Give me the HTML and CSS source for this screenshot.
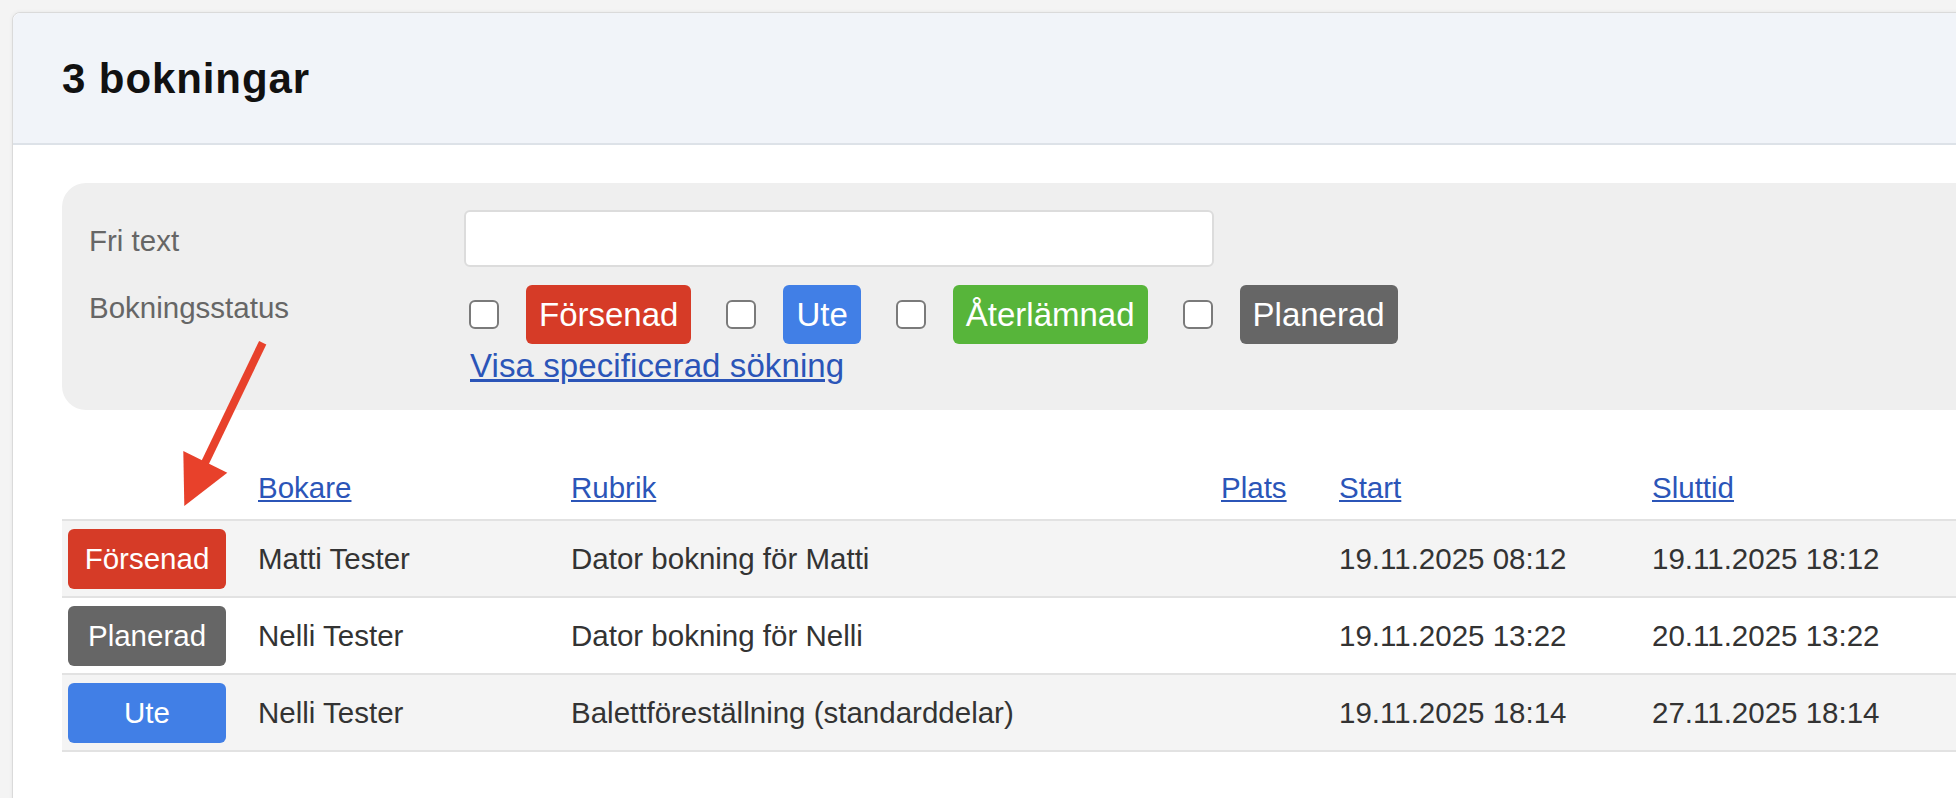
FILE: index.html
```html
<!DOCTYPE html>
<html lang="sv">
<head>
<meta charset="utf-8">
<title>3 bokningar</title>
<link rel="stylesheet" href="styles.css">
</head>
<body>
<div class="card">
  <div class="card-header">
    <h1 class="title">3 bokningar</h1>
  </div>
  <div class="card-body">
    <div class="filter">
      <div class="filter-label label-text">Fri text</div>
      <div class="filter-field"><input class="text-input" type="text"></div>
      <div class="filter-label label-status">Bokningsstatus</div>
      <div class="filter-field">
        <div class="status-row">
          <span class="cb"></span><span class="badge badge-lg red">Försenad</span>
          <span class="cb"></span><span class="badge badge-lg blue">Ute</span>
          <span class="cb"></span><span class="badge badge-lg green">Återlämnad</span>
          <span class="cb"></span><span class="badge badge-lg gray">Planerad</span>
        </div>
        <a class="link adv-link" href="#">Visa specificerad sökning</a>
      </div>
    </div>

    <table class="bookings">
      <colgroup>
        <col class="c-status"><col class="c-bokare"><col class="c-rubrik"><col class="c-plats"><col class="c-start"><col class="c-slut">
      </colgroup>
      <thead>
        <tr>
          <th></th>
          <th><a class="link" href="#">Bokare</a></th>
          <th><a class="link" href="#">Rubrik</a></th>
          <th><a class="link" href="#">Plats</a></th>
          <th><a class="link" href="#">Start</a></th>
          <th><a class="link" href="#">Sluttid</a></th>
        </tr>
      </thead>
      <tbody>
        <tr class="alt">
          <td><span class="badge badge-sm red">Försenad</span></td>
          <td>Matti Tester</td>
          <td>Dator bokning för Matti</td>
          <td></td>
          <td>19.11.2025 08:12</td>
          <td>19.11.2025 18:12</td>
        </tr>
        <tr>
          <td><span class="badge badge-sm gray">Planerad</span></td>
          <td>Nelli Tester</td>
          <td>Dator bokning för Nelli</td>
          <td></td>
          <td>19.11.2025 13:22</td>
          <td>20.11.2025 13:22</td>
        </tr>
        <tr class="alt">
          <td><span class="badge badge-sm blue">Ute</span></td>
          <td>Nelli Tester</td>
          <td>Balettföreställning (standarddelar)</td>
          <td></td>
          <td>19.11.2025 18:14</td>
          <td>27.11.2025 18:14</td>
        </tr>
      </tbody>
    </table>
  </div>
</div>

<svg class="annotation" width="1956" height="798" viewBox="0 0 1956 798" aria-hidden="true">
  <line x1="262.7" y1="342.7" x2="203" y2="467" stroke="#e8412b" stroke-width="8"/>
  <polygon points="183.3,451 227.3,472.7 184.3,506" fill="#e8412b"/>
</svg>
</body>
</html>
```

FILE: styles.css
```css
html, body {
  overflow: hidden;
}

body {
  margin: 0;
  background: #f4f4f4;
  font-family: "Liberation Sans", Arial, Helvetica, sans-serif;
  font-size: 29.5px;
  color: #333;
  position: relative;
  width: 1956px;
  height: 798px;
}

.card {
  margin: 12px 0 0 12px;
  width: 2100px;
  min-height: 900px;
  background: #fff;
  border: 1px solid #dadada;
  border-radius: 8px;
  box-shadow: 0 0 4px rgba(0, 0, 0, 0.06);
}

.card-header {
  background: #f1f4f9;
  padding: 41px 48px 39px;
  border-bottom: 2px solid #dde2e8;
  border-radius: 8px 0 0 0;
}

.title {
  margin: 0 0 0 1px;
  font-size: 42px;
  line-height: 50px;
  font-weight: 700;
  letter-spacing: 0.9px;
  color: #111;
}

.card-body {
  padding: 38px 0 0 49px;
}

.filter {
  background: #efefef;
  border-radius: 24px 0 0 24px;
  padding: 27px 0 25px 27px;
  display: grid;
  grid-template-columns: 375px 1fr;
  row-gap: 16px;
}

.filter-label {
  color: #666;
  font-size: 29.5px;
}

.label-text {
  line-height: 57px;
  padding-top: 2px;
}

.label-status {
  line-height: 36px;
  padding-top: 5px;
}

.text-input {
  display: block;
  box-sizing: border-box;
  width: 750px;
  height: 57px;
  margin: 0;
  border: 2px solid #dcdcdc;
  border-radius: 6px;
  background: #fff;
  outline: none;
}

.status-row {
  display: flex;
  align-items: center;
}

.cb {
  box-sizing: border-box;
  width: 30px;
  height: 29px;
  border: 2px solid #7a7a7a;
  border-radius: 6px;
  background: #fff;
  margin: 0 27px 0 5px;
  flex: none;
}

.status-row .badge-lg {
  margin-right: 30px;
}

.badge {
  color: #fff;
  border-radius: 6px;
  white-space: nowrap;
}

.badge-lg {
  display: inline-block;
  font-size: 33px;
  height: 59px;
  line-height: 59px;
  padding: 0 13px;
}

.badge-sm {
  display: flex;
  align-items: center;
  justify-content: center;
  width: 158px;
  height: 60px;
  font-size: 29.5px;
}

.red { background: #d63b27; }
.blue { background: #417fe6; }
.green { background: #57b53a; }
.gray { background: #666666; }

.link {
  color: #2b55b8;
  text-decoration: underline;
}

.adv-link {
  display: inline-block;
  margin: 3px 0 0 6px;
  font-size: 33px;
  line-height: 38px;
  letter-spacing: 0.1px;
}

.bookings {
  margin-top: 48px;
  border-collapse: collapse;
  table-layout: fixed;
  width: 2030px;
}

.c-status { width: 190px; }
.c-bokare { width: 313px; }
.c-rubrik { width: 650px; }
.c-plats { width: 118px; }
.c-start { width: 313px; }
.c-slut { width: auto; }

.bookings th {
  text-align: left;
  font-weight: normal;
  padding: 12px 6px 13px;
  line-height: 36px;
  vertical-align: bottom;
  border-bottom: 2px solid #e2e2e2;
}

.bookings td {
  height: 75px;
  padding: 0 6px;
  border-bottom: 2px solid #e2e2e2;
  vertical-align: middle;
  color: #333;
  white-space: nowrap;
}

.bookings tr.alt td {
  background: #f4f4f4;
}

.annotation {
  position: absolute;
  left: 0;
  top: 0;
  pointer-events: none;
}
```
